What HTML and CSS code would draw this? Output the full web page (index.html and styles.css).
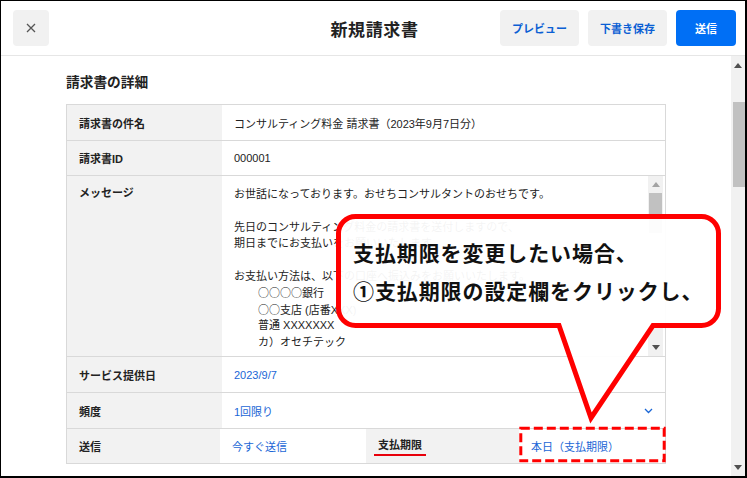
FILE: index.html
```html
<!DOCTYPE html>
<html lang="ja">
<head>
<meta charset="utf-8">
<title>新規請求書</title>
<link rel="stylesheet" href="styles.css">
</head>
<body>
<div class="frame">
  <header class="header">
    <div class="hleft">
      <button class="close" type="button" aria-label="閉じる">
        <svg width="10" height="10" viewBox="0 0 10 10"><path d="M1 1 L9 9 M9 1 L1 9" stroke="#555" stroke-width="1.3" fill="none"/></svg>
      </button>
    </div>
    <h1 class="title">新規請求書</h1>
    <div class="hright">
      <button class="btn" type="button">プレビュー</button>
      <button class="btn" type="button">下書き保存</button>
      <button class="btn primary" type="button">送信</button>
    </div>
  </header>
  <div class="body">
    <main class="content">
      <h2 class="section-title">請求書の詳細</h2>
      <div class="table">
        <div class="row r1">
          <div class="label">請求書の件名</div>
          <div class="value">コンサルティング料金 請求書（2023年9月7日分）</div>
        </div>
        <div class="row r2">
          <div class="label">請求書ID</div>
          <div class="value">000001</div>
        </div>
        <div class="row r3">
          <div class="label top">メッセージ</div>
          <div class="message">
            <div class="msg-text">
              <div class="line">お世話になっております。おせちコンサルタントのおせちです。</div>
              <div class="line"></div>
              <div class="line">先日のコンサルティング料金の請求書を送付しますので、</div>
              <div class="line">期日までにお支払いをお願いいたします。</div>
              <div class="line"></div>
              <div class="line">お支払い方法は、以下の口座へ振込みをお願いいたします。</div>
              <div class="line indent"><span class="cjk">○○○○</span>銀行</div>
              <div class="line indent"><span class="cjk">○○</span>支店 (店番XXX)</div>
              <div class="line indent">普通 XXXXXXX</div>
              <div class="line indent">カ）オセチテック</div>
            </div>
            <div class="mini-scroll">
              <div class="arrow"><svg width="8" height="5" viewBox="0 0 8 5"><path d="M0 5 L4 0 L8 5Z" fill="#a3a3a3"/></svg></div>
              <div class="mini-thumb"></div>
              <div class="fill"></div>
              <div class="arrow"><svg width="8" height="5" viewBox="0 0 8 5"><path d="M0 0 L8 0 L4 5Z" fill="#505050"/></svg></div>
            </div>
          </div>
        </div>
        <div class="row r4">
          <div class="label">サービス提供日</div>
          <div class="value link">2023/9/7</div>
        </div>
        <div class="row r5">
          <div class="label">頻度</div>
          <div class="value link split">
            <span>1回限り</span>
            <svg width="9" height="6" viewBox="0 0 9 6"><path d="M1 1 L4.5 4.5 L8 1" stroke="#1a66d6" stroke-width="1.3" fill="none"/></svg>
          </div>
        </div>
        <div class="row r6">
          <div class="label">送信</div>
          <div class="value link">今すぐ送信</div>
          <div class="label sub"><span class="marked">支払期限</span></div>
          <div class="value link">本日（支払期限）</div>
        </div>
      </div>
    </main>
    <div class="vscroll">
      <div class="arrow"><svg width="8" height="5" viewBox="0 0 8 5"><path d="M0 5 L4 0 L8 5Z" fill="#505050"/></svg></div>
      <div class="thumb"></div>
      <div class="fill"></div>
      <div class="arrow"><svg width="8" height="5" viewBox="0 0 8 5"><path d="M0 0 L8 0 L4 5Z" fill="#505050"/></svg></div>
    </div>
  </div>
  <svg class="overlay" width="747" height="478" viewBox="0 0 747 478">
    <path d="M355.5 216.5 H701.5 A17 17 0 0 1 718.5 233.5 V308.5 A17 17 0 0 1 701.5 325.5 H653 L591 418 L559 325.5 H355.5 A17 17 0 0 1 338.5 308.5 V233.5 A17 17 0 0 1 355.5 216.5 Z" fill="rgba(255,255,255,0.95)" stroke="#ff0000" stroke-width="5" stroke-linejoin="miter"/>
    <rect x="520.8" y="428.2" width="143.4" height="32.6" fill="none" stroke="#ff0000" stroke-width="3" stroke-dasharray="9 4"/>
  </svg>
  <div class="callout-text">
    <div>支払期限を変更したい場合、</div>
    <div>①支払期限の設定欄をクリックし、</div>
  </div>
</div>
</body>
</html>
```

FILE: styles.css
```css
* { box-sizing: border-box; }
html, body { margin: 0; padding: 0; }
body {
  width: 747px;
  height: 478px;
  overflow: hidden;
  background: #fff;
  font-family: "Liberation Sans", "Noto Sans CJK JP", sans-serif;
  color: #222;
}
.frame {
  position: relative;
  width: 747px;
  height: 478px;
  border-style: solid;
  border-color: #000;
  border-width: 1px 2px 2px 1px;
  overflow: hidden;
  display: flex;
  flex-direction: column;
}
.header {
  height: 55px;
  flex: none;
  border-bottom: 1px solid #e6e6e6;
  display: grid;
  grid-template-columns: 1fr auto 1fr;
  align-items: center;
  padding: 0 9px 0 12px;
}
.hleft { display: flex; }
.close {
  width: 36px;
  height: 36px;
  border: none;
  border-radius: 4px;
  background: #f1f1f1;
  display: flex;
  align-items: center;
  justify-content: center;
  padding: 0;
}
.title {
  margin: 0;
  font-family: "Noto Sans CJK JP", sans-serif;
  font-size: 17px;
  letter-spacing: 0.6px;
  font-weight: 700;
  color: #222;
}
.hright {
  display: flex;
  justify-content: flex-end;
  gap: 9px;
}
.btn {
  height: 36px;
  width: 79px;
  border: none;
  border-radius: 4px;
  background: #f1f1f1;
  color: #0b5fd4;
  font-family: "Noto Sans CJK JP", sans-serif;
  font-size: 11px;
  font-weight: 700;
  padding: 0;
}
.btn.primary {
  width: 60px;
  background: #006ff5;
  color: #fff;
}
.body {
  flex: 1;
  display: flex;
  min-height: 0;
}
.content {
  flex: 1;
  overflow: hidden;
  padding: 15px 0 0 65px;
}
.section-title {
  margin: 0 0 13px;
  font-family: "Noto Sans CJK JP", sans-serif;
  font-size: 13.7px;
  line-height: 20px;
  font-weight: 700;
}
.table {
  width: 600px;
  border: 1px solid #d9d9d9;
  font-size: 11px;
}
.row {
  display: grid;
  grid-template-columns: 155px 1fr;
  border-bottom: 1px solid #d9d9d9;
}
.row:last-child { border-bottom: none; }
.r1 { height: 36px; }
.r2 { height: 35px; }
.r3 { height: 181px; }
.r4 { height: 36px; }
.r5 { height: 36px; }
.r6 { height: 34px; grid-template-columns: 153px 146px 153px 1fr; }
.label {
  background: #f2f2f2;
  font-weight: 700;
  padding-left: 12px;
  display: flex;
  align-items: center;
  color: #222;
}
.label.top { align-items: flex-start; padding-top: 9px; line-height: 16px; }
.label.sub { padding-left: 8px; }
.marked {
  padding: 0 4px 2px;
  border-bottom: 2px solid #e8000b;
}
.value {
  padding-left: 12px;
  display: flex;
  align-items: center;
  color: #222;
}
.value.link { color: #1a66d6; }
.value.split { justify-content: space-between; padding-right: 12px; }
.message {
  display: flex;
  min-height: 0;
  overflow: hidden;
  padding-right: 2px;
}
.msg-text {
  flex: 1;
  padding: 10px 0 0 12px;
  line-height: 16.4px;
  overflow: hidden;
  white-space: nowrap;
}
.line { height: 16.4px; }
.line.indent { padding-left: 24px; }
.cjk { font-family: "Noto Sans CJK JP", sans-serif; }
.mini-scroll {
  width: 15px;
  background: #f1f1f1;
  display: flex;
  flex-direction: column;
  align-items: center;
}
.mini-scroll .arrow { height: 17px; }
.mini-thumb {
  width: 13px;
  height: 40px;
  background: #c1c1c1;
}
.arrow {
  width: 100%;
  display: flex;
  align-items: center;
  justify-content: center;
  flex: none;
}
.fill { flex: 1; }
.vscroll {
  width: 14px;
  flex: none;
  background: #f1f1f1;
  display: flex;
  flex-direction: column;
  align-items: flex-end;
}
.vscroll .arrow { height: 18px; }
.thumb {
  width: 12px;
  height: 85px;
  margin-top: 28px;
  background: #c1c1c1;
}
.overlay {
  position: absolute;
  left: -1px;
  top: -1px;
  pointer-events: none;
}
.callout-text {
  position: absolute;
  left: 352px;
  top: 232px;
  font-family: "Noto Sans CJK JP", sans-serif;
  font-size: 21px;
  font-weight: 700;
  line-height: 38px;
  letter-spacing: 0.9px;
  color: #111;
  white-space: nowrap;
}
```
